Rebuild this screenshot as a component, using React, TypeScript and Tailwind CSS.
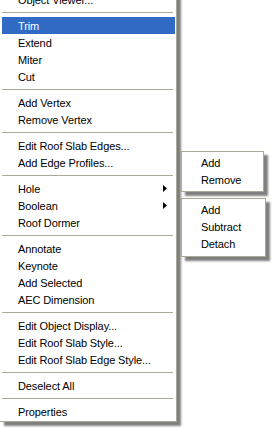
import React from 'react';

type Entry = { label?: string; sep?: boolean; sub?: boolean; active?: boolean };

const mainItems: Entry[] = [
  { label: 'Object Viewer...' },
  { sep: true },
  { label: 'Trim', active: true },
  { label: 'Extend' },
  { label: 'Miter' },
  { label: 'Cut' },
  { sep: true },
  { label: 'Add Vertex' },
  { label: 'Remove Vertex' },
  { sep: true },
  { label: 'Edit Roof Slab Edges...' },
  { label: 'Add Edge Profiles...' },
  { sep: true },
  { label: 'Hole', sub: true },
  { label: 'Boolean', sub: true },
  { label: 'Roof Dormer' },
  { sep: true },
  { label: 'Annotate' },
  { label: 'Keynote' },
  { label: 'Add Selected' },
  { label: 'AEC Dimension' },
  { sep: true },
  { label: 'Edit Object Display...' },
  { label: 'Edit Roof Slab Style...' },
  { label: 'Edit Roof Slab Edge Style...' },
  { sep: true },
  { label: 'Deselect All' },
  { sep: true },
  { label: 'Properties' },
];

const Arrow = () => (
  <svg width="4" height="7" viewBox="0 0 4 7" className="block">
    <polygon points="0,0 4,3.5 0,7" fill="#000" />
  </svg>
);

const MenuRow: React.FC<{ item: Entry }> = ({ item }) => {
  if (item.sep) {
    return (
      <div className="h-[9px] flex items-center pr-[2px]">
        <div className="h-px w-full bg-[#aca899]" />
      </div>
    );
  }
  return (
    <div
      className={`h-[17px] flex items-center justify-between pl-[16px] pr-[8px] ${
        item.active ? 'bg-[#316ac5] text-white' : 'text-black'
      }`}
    >
      <span className="leading-[17px] pt-[1px] tracking-[-0.1px]">{item.label}</span>
      {item.sub && <Arrow />}
    </div>
  );
};

const SubMenu: React.FC<{ items: string[]; className: string }> = ({ items, className }) => (
  <div
    className={`absolute left-[181px] bg-white border border-[#aca899] shadow-[4px_4px_2px_rgba(0,0,0,0.5)] ${className}`}
  >
    {items.map((label) => (
      <div key={label} className="h-[17px] leading-[17px] pt-[1px] pl-[19px] text-black tracking-[-0.1px]">
        {label}
      </div>
    ))}
  </div>
);

export default function App() {
  return (
    <div
      className="relative w-[272px] h-[428px] overflow-hidden bg-white text-[11px]"
      style={{ fontFamily: '"Liberation Sans", Arial, sans-serif' }}
    >
      {/* main context menu */}
      <div className="mt-[-9px] w-[177px] bg-white pl-[2px] pr-[1px] pb-[1px] border-r border-b border-[#aca899] shadow-[4px_4px_2px_rgba(0,0,0,0.5)]">
        {mainItems.map((item, i) => (
          <MenuRow key={i} item={item} />
        ))}
      </div>

      {/* Hole submenu */}
      <SubMenu items={['Add', 'Remove']} className="top-[151px] w-[83px] pt-[2px] pb-[3px]" />

      {/* Boolean submenu */}
      <SubMenu items={['Add', 'Subtract', 'Detach']} className="top-[198px] w-[85px] pt-[2px] pb-[4px]" />
    </div>
  );
}
